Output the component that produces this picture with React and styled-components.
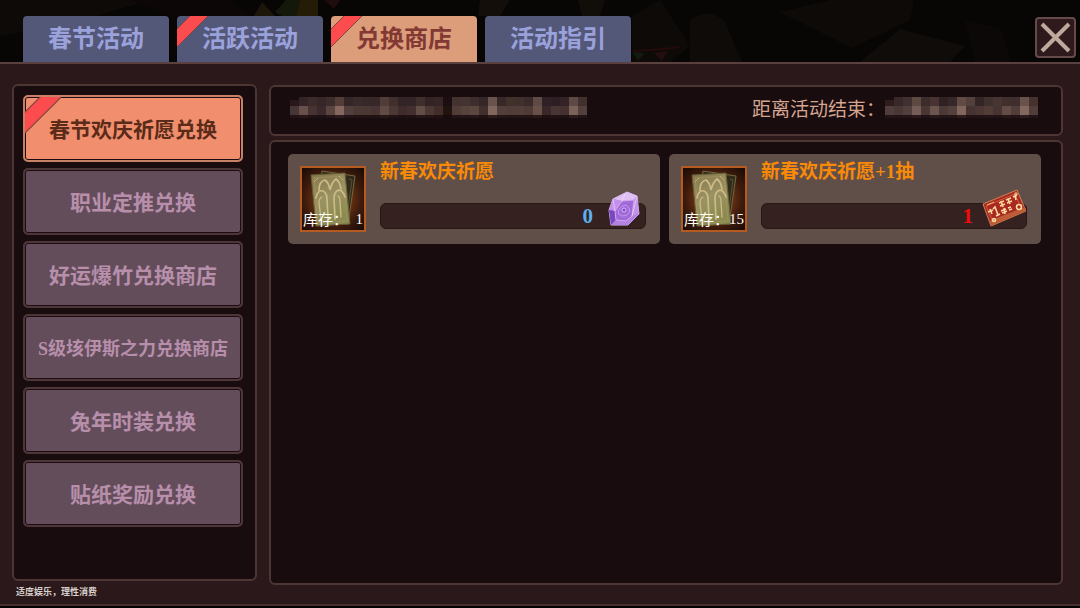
import React, { useState } from 'react';
import styled, { createGlobalStyle, css } from 'styled-components';

const GlobalStyle = createGlobalStyle`
  * {
    box-sizing: border-box;
  }

  body {
    margin: 0;
    background: #050203;
    font-family: 'Liberation Serif', 'Noto Sans CJK SC', serif;
  }

  button {
    font-family: inherit;
    cursor: pointer;
  }
`;

const Page = styled.div`
  display: flex;
  flex-direction: column;
  min-height: 100vh;
  padding-bottom: 2px;
`;

const Header = styled.header`
  display: grid;
`;

const Scene = styled.svg`
  grid-area: 1 / 1;
  width: 100%;
  height: 62px;
`;

const HeaderRow = styled.div`
  grid-area: 1 / 1;
  z-index: 1;
  display: flex;
  justify-content: space-between;
  align-items: flex-start;
  padding: 16px 4px 0 23px;
`;

const Tabs = styled.nav`
  display: flex;
  gap: 8px;
`;

const Tab = styled.button`
  position: relative;
  width: 146px;
  height: 46px;
  padding: 0;
  border: 0;
  border-radius: 4px 4px 0 0;
  overflow: hidden;
  font-size: 24px;
  font-weight: 700;
  line-height: 32px;
  color: ${({ $active }) => ($active ? '#823833' : '#9ba2db')};
  background: ${({ $active }) => ($active ? '#dc9d7a' : '#535778')};
`;

const Flag = styled.svg`
  position: absolute;
  top: 0;
  left: 0;
`;

const CloseButton = styled.button`
  display: flex;
  align-items: center;
  justify-content: center;
  width: 41px;
  height: 41px;
  margin-top: 1px;
  padding: 0;
  border: 2px solid #66494a;
  border-radius: 4px;
  background: #2e191d;
`;

const Body = styled.main`
  flex: 1;
  display: flex;
  gap: 12px;
  padding: 20px 17px 19px 12px;
  border-top: 2px solid #5a403e;
  border-bottom: 2px solid #49302f;
  background: #2a181b;
`;

const panel = css`
  border: 2px solid #4d3534;
  border-radius: 6px;
  background: #190c0f;
`;

const Side = styled.aside`
  flex: none;
  width: 245px;
  display: flex;
  flex-direction: column;
  margin-bottom: -14px;
`;

const SideList = styled.div`
  ${panel}
  flex: 1;
  display: flex;
  flex-direction: column;
  gap: 6px;
  padding: 9px 12px 9px 9px;
`;

const SideItem = styled.button`
  position: relative;
  height: 67px;
  padding: 0 0 1px;
  border: 2px solid ${({ $active }) => ($active ? '#c88067' : '#4c3639')};
  border-radius: 5px;
  overflow: hidden;
  font-size: ${({ $small }) => ($small ? '18px' : '21px')};
  font-weight: 700;
  white-space: nowrap;
  color: ${({ $active }) => ($active ? '#5b2b19' : '#b78fab')};
  background: ${({ $active }) => ($active ? '#f08e6e' : '#644d5b')};
  box-shadow: inset 0 0 0 1px #1d0d10;
`;

const Notice = styled.p`
  margin: 0;
  padding: 4px 4px 0;
  font-size: 9px;
  line-height: 14px;
  font-weight: 700;
  color: #d9cfcb;
`;

const Content = styled.section`
  flex: 1;
  min-width: 0;
  display: flex;
  flex-direction: column;
  gap: 4px;
  padding-top: 1px;
`;

const InfoBar = styled.div`
  ${panel}
  display: flex;
  justify-content: space-between;
  align-items: flex-start;
  height: 51px;
  padding: 9px 23px 0 19px;
`;

const Countdown = styled.div`
  display: flex;
  font-family: 'Noto Sans CJK SC', sans-serif;
  font-size: 19px;
  line-height: 24px;
  color: #d5a58f;
`;

const Mosaic = styled.svg`
  display: block;
  height: 24px;
  opacity: 0.9;
`;

const Goods = styled.div`
  ${panel}
  flex: 1;
  display: grid;
  grid-template-columns: 1fr 1fr;
  align-content: start;
  gap: 9px;
  padding: 12px 20px 12px 17px;
`;

const Card = styled.article`
  display: flex;
  gap: 14px;
  height: 90px;
  padding: 12px 14px 12px 12px;
  border-radius: 5px;
  background: #604e48;
`;

const Thumb = styled.div`
  flex: none;
  display: grid;
  width: 66px;
  height: 66px;
  border: 2px solid #b55a20;
  background: radial-gradient(circle, #8a4115 20%, #3d1b0c 65%, #170a06 100%);
`;

const ThumbArt = styled.svg`
  grid-area: 1 / 1;
`;

const Stock = styled.div`
  grid-area: 1 / 1;
  z-index: 1;
  align-self: end;
  display: flex;
  justify-content: space-between;
  padding: 0 1px;
  font-family: 'Noto Sans CJK SC', sans-serif;
  font-size: 15px;
  line-height: 22px;
  white-space: nowrap;
  color: #fff;
`;

const StockCount = styled.span`
  font-family: 'Liberation Serif', serif;
`;

const CardBody = styled.div`
  flex: 1;
  min-width: 0;
  display: flex;
  flex-direction: column;
  justify-content: space-between;
  padding-bottom: 3px;
`;

const Name = styled.h3`
  margin: -6px 0 0;
  font-size: 19px;
  line-height: 24px;
  font-weight: 700;
  color: #f88a08;
`;

const Price = styled.div`
  display: flex;
  align-items: flex-end;
  justify-content: flex-end;
  gap: ${({ $inset }) => ($inset ? '15px' : '9px')};
  height: 26px;
  padding-right: ${({ $inset }) => ($inset ? '5px' : '0')};
  border: 1px solid #271716;
  border-radius: 6px;
  background: #352220;
`;

const Cost = styled.span`
  align-self: center;
  font-size: 21px;
  line-height: 24px;
  font-weight: 700;
  color: ${({ $short }) => ($short ? '#f00c0c' : '#5cb0ee')};
`;

const Currency = styled.svg`
  flex: none;
  margin-bottom: 1px;
`;

const CornerFlag = ({ size }) => (
  <Flag width={size} height={size} viewBox="0 0 36 36" aria-hidden="true">
    <path d="M0 13 13 0H31L0 31Z" fill="#fc4c4d" />
    <path d="M31 0 0 31M13 0 0 13" fill="none" stroke="#83443f" strokeWidth="1" />
  </Flag>
);

const nameTop = '#2b191b #37272a #412f2f #3a292b #40302f #59433e #38282a #3c2d2d #3a2b2b #3b2b2b #57433f #453331 #35272a #35272a #44332f #362628 #392828 #1c0e12 #493735 #4a3835 #423231 #392a2b #735b54 #3a2a2c #47362f #443432 #3f2e2f #68514c #32232a #302127 #36262a #65504b #46342f'.split(' ');
const nameBottom = '#4d3b3b #735852 #4b3837 #3e2c2d #604b46 #927168 #594540 #503e3a #503d3a #4e3a38 #6a514b #503d3a #442f2f #483331 #6c554e #513c38 #47312f #22150f #58423d #5d4943 #634d46 #47322f #8d7067 #594540 #57433e #58433f #564039 #725850 #3c292b #4f3b39 #4a3634 #856c61 #594641'.split(' ');
const timeTop = '#30211f #3c2c2c #463536 #665048 #403030 #4c3836 #332527 #3a2b2c #69524b #5a4640 #362729 #443331 #4d3a37 #46332f #443230 #725a52 #4a3733'.split(' ');
const timeBottom = '#554240 #4f3c3b #594441 #80665d #503c39 #765e55 #513e3b #5b4641 #8e7066 #4b3835 #503c38 #58423d #4b3836 #6c544d #59433e #8e7268 #5a433e'.split(' ');

const Redacted = ({ top, bottom, label }) => (
  <Mosaic width={top.length * 9} height="24" role="img" aria-label={label}>
    {top.map((fill, i) => (
      <rect key={`t${i}`} x={i * 9} y={i ? 1 : 4} width="9" height={i ? 9 : 6} fill={fill} />
    ))}
    {bottom.map((fill, i) => (
      <React.Fragment key={`b${i}`}>
        <rect x={i * 9} y="10" width="9" height="9" fill={fill} />
        <rect x={i * 9} y="19" width="9" height="3" fill={fill} opacity="0.18" />
      </React.Fragment>
    ))}
  </Mosaic>
);

const CardsArt = () => (
  <ThumbArt width="62" height="62" viewBox="0 0 62 62" aria-hidden="true">
    <defs>
      <linearGradient id="paper" x1="0" y1="0" x2="0.4" y2="1">
        <stop offset="0" stopColor="#85764c" />
        <stop offset="0.55" stopColor="#9a9263" />
        <stop offset="1" stopColor="#8b8a50" />
      </linearGradient>
    </defs>
    <path d="M20 3 53 8 46 56 15 51Z" fill="#302a1b" stroke="#74683f" />
    <path d="M47 11 50 12 45 48" fill="none" stroke="#5b5133" />
    <path d="M9 7 43 5 48 56 14 58Z" fill="url(#paper)" stroke="#655a34" />
    <path d="M12 10 41 8 45 53 16 55Z" fill="none" stroke="#a2935f" strokeWidth="0.7" />
    <path d="M12 14 16 10M37 8 41 12" stroke="#c2ae74" />
    <g fill="none" stroke="#cdbb85" strokeWidth="1.7" strokeLinecap="round">
      <path d="M17 22C17 17 19 13 23 12Q27 15 28 22Q30 14 34 11Q38 14 39 21" />
      <path d="M14 30C15 24 18 22 21 23Q25 25 25 31L26 51" />
      <path d="M43 29C41 23 38 21 35 23Q32 25 32 31L33 51" />
      <path d="M19 51 17 35Q17 30 20 29M39 49 38 34Q38 29 36 28" strokeWidth="1.3" />
    </g>
  </ThumbArt>
);

const Gem = () => (
  <Currency width="32" height="36" viewBox="0 0 32 36" aria-hidden="true">
    <path d="M5 8 19 1 29 5 31 23 20 34 3 34 1 19Z" fill="#a66bdd" stroke="#d7b5f3" />
    <path d="M5 8 19 1 29 5 26 9 14 10Z" fill="#dfc0f2" />
    <path d="M5 8 14 10 7 20 1 19Z" fill="#c391ec" />
    <path d="M26 9 29 5 31 23 24 25Z" fill="#c393e8" />
    <path d="M1 19 7 20 8 29 3 34Z" fill="#7847c2" />
    <path d="M3 34 8 29 18 30 24 25 31 23 20 34Z" fill="#b483e1" />
    <path d="M14 10 26 9 24 25 18 30 8 29 7 20Z" fill="#a06bd9" stroke="#d3a9ee" />
    <path d="M10 20Q13 14 18 14Q22 17 22 21Q18 26 14 25Q10 24 10 20Z" fill="none" stroke="#c797ec" />
    <circle cx="16" cy="19" r="2" fill="#7d49c6" stroke="#dcb6f8" />
    <path d="M17 3 14 10M5 8 7 20M29 5 24 25" stroke="#f0daff" strokeWidth="0.7" />
  </Currency>
);

const Ticket = () => (
  <Currency width="44" height="38" viewBox="0 0 44 38" aria-hidden="true">
    <path d="M1 15 35 1 44 22 9 37Z" fill="#a82921" stroke="#d38053" />
    <path d="M4 17 33 5 40 21 11 33Z" fill="none" stroke="#d86b45" strokeWidth="0.8" />
    <path d="M9 37 7 32 43 18 44 22Z" fill="#bd5c37" />
    <g fill="none" stroke="#ffda9c" strokeWidth="1.6">
      <path d="M6 23 11 21M8 20 10 25M11 20 13 18 16 26M14 27 18 25" />
      <path d="M17 14 22 12M18 17 23 15M19 12 21 18M24 11 29 9M25 14 30 12M26 10 28 15M31 8 35 6M33 6 34 11" />
      <path d="M19 22 24 20M20 24 25 22M22 19 23 25M26 19 29 18M27 21 30 20" />
      <circle cx="37" cy="18" r="2.5" />
      <circle cx="12" cy="31" r="1.5" />
      <circle cx="34" cy="5" r="1.2" strokeWidth="1" />
      <path d="M5 16 12 13" strokeWidth="0.8" />
    </g>
  </Currency>
);

const tabs = [
  { label: '春节活动' },
  { label: '活跃活动', flag: true },
  { label: '兑换商店', flag: true },
  { label: '活动指引' },
];

const shops = [
  { label: '春节欢庆祈愿兑换', flag: true },
  { label: '职业定推兑换' },
  { label: '好运爆竹兑换商店' },
  { label: 'S级垓伊斯之力兑换商店', small: true },
  { label: '兔年时装兑换' },
  { label: '贴纸奖励兑换' },
];

const goods = [
  { name: '新春欢庆祈愿', stock: 1, cost: 0, icon: <Gem />, inset: true },
  { name: '新春欢庆祈愿+1抽', stock: 15, cost: 1, short: true, icon: <Ticket /> },
];

const App = () => {
  const [tab, setTab] = useState(2);
  const [shop, setShop] = useState(0);

  return (
    <>
      <GlobalStyle />
      <Page>
        <Header>
          <Scene viewBox="0 0 1080 62" preserveAspectRatio="none" aria-hidden="true">
            <rect width="1080" height="62" fill="#080505" />
            <path d="M0 0H150L90 18 0 36Z" fill="#0d0a08" />
            <path d="M130 0H230L250 16H170Z" fill="#0c0706" />
            <path d="M254 16 262 2 275 16Z" fill="#1b1609" />
            <path d="M275 12 286 0H300L296 16H282Z" fill="#14180b" />
            <path d="M300 0H318V16H296Z" fill="#241c07" />
            <path d="M324 0H340L334 9Z" fill="#1f0d0d" />
            <path d="M480 0H510L500 16H478Z" fill="#140e0a" />
            <path d="M578 0H605L600 16H582Z" fill="#110d09" />
            <path d="M632 16 660 0 690 46 670 62H632Z" fill="#0d0a08" />
            <path d="M633 51Q660 50 680 47" fill="none" stroke="#220a08" strokeWidth="2" />
            <path d="M633 52 645 53 638 61Z" fill="#121a0d" />
            <path d="M654 53 668 51 662 61Z" fill="#220e0f" />
            <path d="M690 20Q710 6 725 22L742 62H690Z" fill="#0e0b09" />
            <path d="M780 12 830 0H914L910 20 852 48Z" fill="#0d0a08" />
            <path d="M860 62 900 29 965 46 950 62Z" fill="#0f0c0a" />
            <path d="M965 20 1000 28 1012 62H975Z" fill="#0b0807" />
          </Scene>
          <HeaderRow>
            <Tabs>
              {tabs.map((item, index) => (
                <Tab key={item.label} $active={index === tab} onClick={() => setTab(index)}>
                  {item.flag && <CornerFlag size={36} />}
                  {item.label}
                </Tab>
              ))}
            </Tabs>
            <CloseButton aria-label="关闭">
              <svg width="33" height="33" viewBox="0 0 33 33" aria-hidden="true">
                <path d="M3 3 30 30M30 3 3 30" stroke="#bfa99b" strokeWidth="4" />
              </svg>
            </CloseButton>
          </HeaderRow>
        </Header>
        <Body>
          <Side>
            <SideList>
              {shops.map((item, index) => (
                <SideItem
                  key={item.label}
                  $active={index === shop}
                  $small={item.small}
                  onClick={() => setShop(index)}
                >
                  {item.flag && <CornerFlag size={42} />}
                  {item.label}
                </SideItem>
              ))}
            </SideList>
            <Notice>适度娱乐，理性消费</Notice>
          </Side>
          <Content>
            <InfoBar>
              <Redacted top={nameTop} bottom={nameBottom} label="活动时间" />
              <Countdown>
                距离活动结束：
                <Redacted top={timeTop} bottom={timeBottom} label="剩余时间" />
              </Countdown>
            </InfoBar>
            <Goods>
              {goods.map((item) => (
                <Card key={item.name}>
                  <Thumb>
                    <CardsArt />
                    <Stock>
                      <span>库存：</span>
                      <StockCount>{item.stock}</StockCount>
                    </Stock>
                  </Thumb>
                  <CardBody>
                    <Name>{item.name}</Name>
                    <Price $inset={item.inset}>
                      <Cost $short={item.short}>{item.cost}</Cost>
                      {item.icon}
                    </Price>
                  </CardBody>
                </Card>
              ))}
            </Goods>
          </Content>
        </Body>
      </Page>
    </>
  );
};

export default App;
